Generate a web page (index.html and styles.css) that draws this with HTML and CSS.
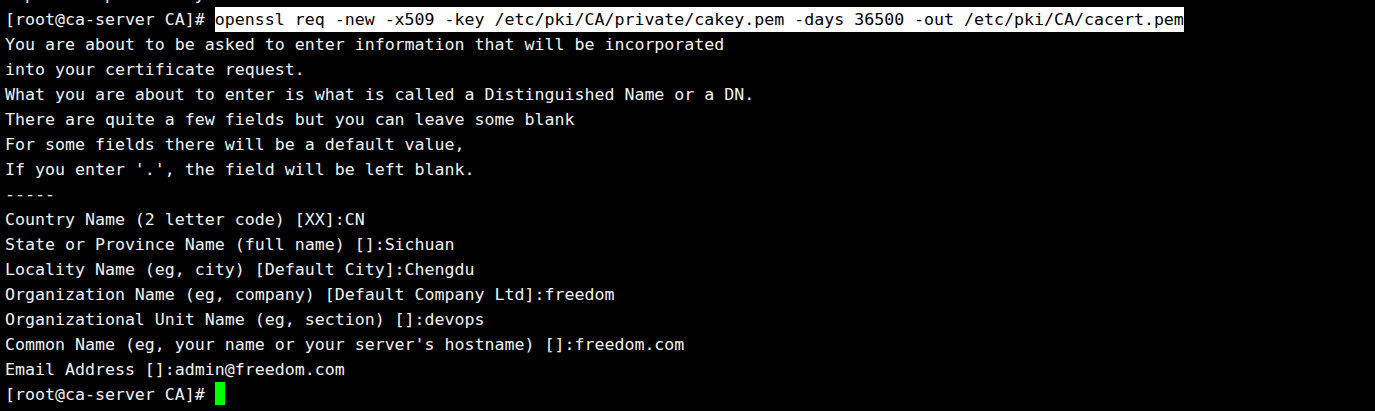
FILE: index.html
```html
<!DOCTYPE html>
<html>
<head>
<meta charset="utf-8">
<link rel="stylesheet" href="styles.css">
</head>
<body>
<div class="term">
<div class="line clip">  p       p        y</div>
<div class="line">[root@ca-server CA]# <span class="sel">openssl req -new -x509 -key /etc/pki/CA/private/cakey.pem -days 36500 -out /etc/pki/CA/cacert.pem</span></div>
<div class="line">You are about to be asked to enter information that will be incorporated</div>
<div class="line">into your certificate request.</div>
<div class="line">What you are about to enter is what is called a Distinguished Name or a DN.</div>
<div class="line">There are quite a few fields but you can leave some blank</div>
<div class="line">For some fields there will be a default value,</div>
<div class="line">If you enter '.', the field will be left blank.</div>
<div class="line">-----</div>
<div class="line">Country Name (2 letter code) [XX]:CN</div>
<div class="line">State or Province Name (full name) []:Sichuan</div>
<div class="line">Locality Name (eg, city) [Default City]:Chengdu</div>
<div class="line">Organization Name (eg, company) [Default Company Ltd]:freedom</div>
<div class="line">Organizational Unit Name (eg, section) []:devops</div>
<div class="line">Common Name (eg, your name or your server's hostname) []:freedom.com</div>
<div class="line">Email Address []:admin@freedom.com</div>
<div class="line">[root@ca-server CA]# <span class="cursor"> </span></div>
</div>
</body>
</html>
```
FILE: styles.css
```css
html, body {
  margin: 0;
  padding: 0;
  background: #000;
  overflow: hidden;
}
.term {
  width: 1375px;
  height: 411px;
  overflow: hidden;
  background: #000;
  color: #f2f2f2;
  font-family: "DejaVu Sans Mono", monospace;
  font-size: 16.6px;
  padding-left: 5px;
  box-sizing: border-box;
}
.line {
  height: 25px;
  line-height: 25px;
  white-space: pre;
}
.clip {
  margin-top: -18px;
}
.sel {
  background: #ffffff;
  color: #000000;
  display: inline-block;
  height: 25px;
}
.cursor {
  display: inline-block;
  width: 10px;
  height: 23px;
  background: #00ff00;
  vertical-align: top;
}
```
